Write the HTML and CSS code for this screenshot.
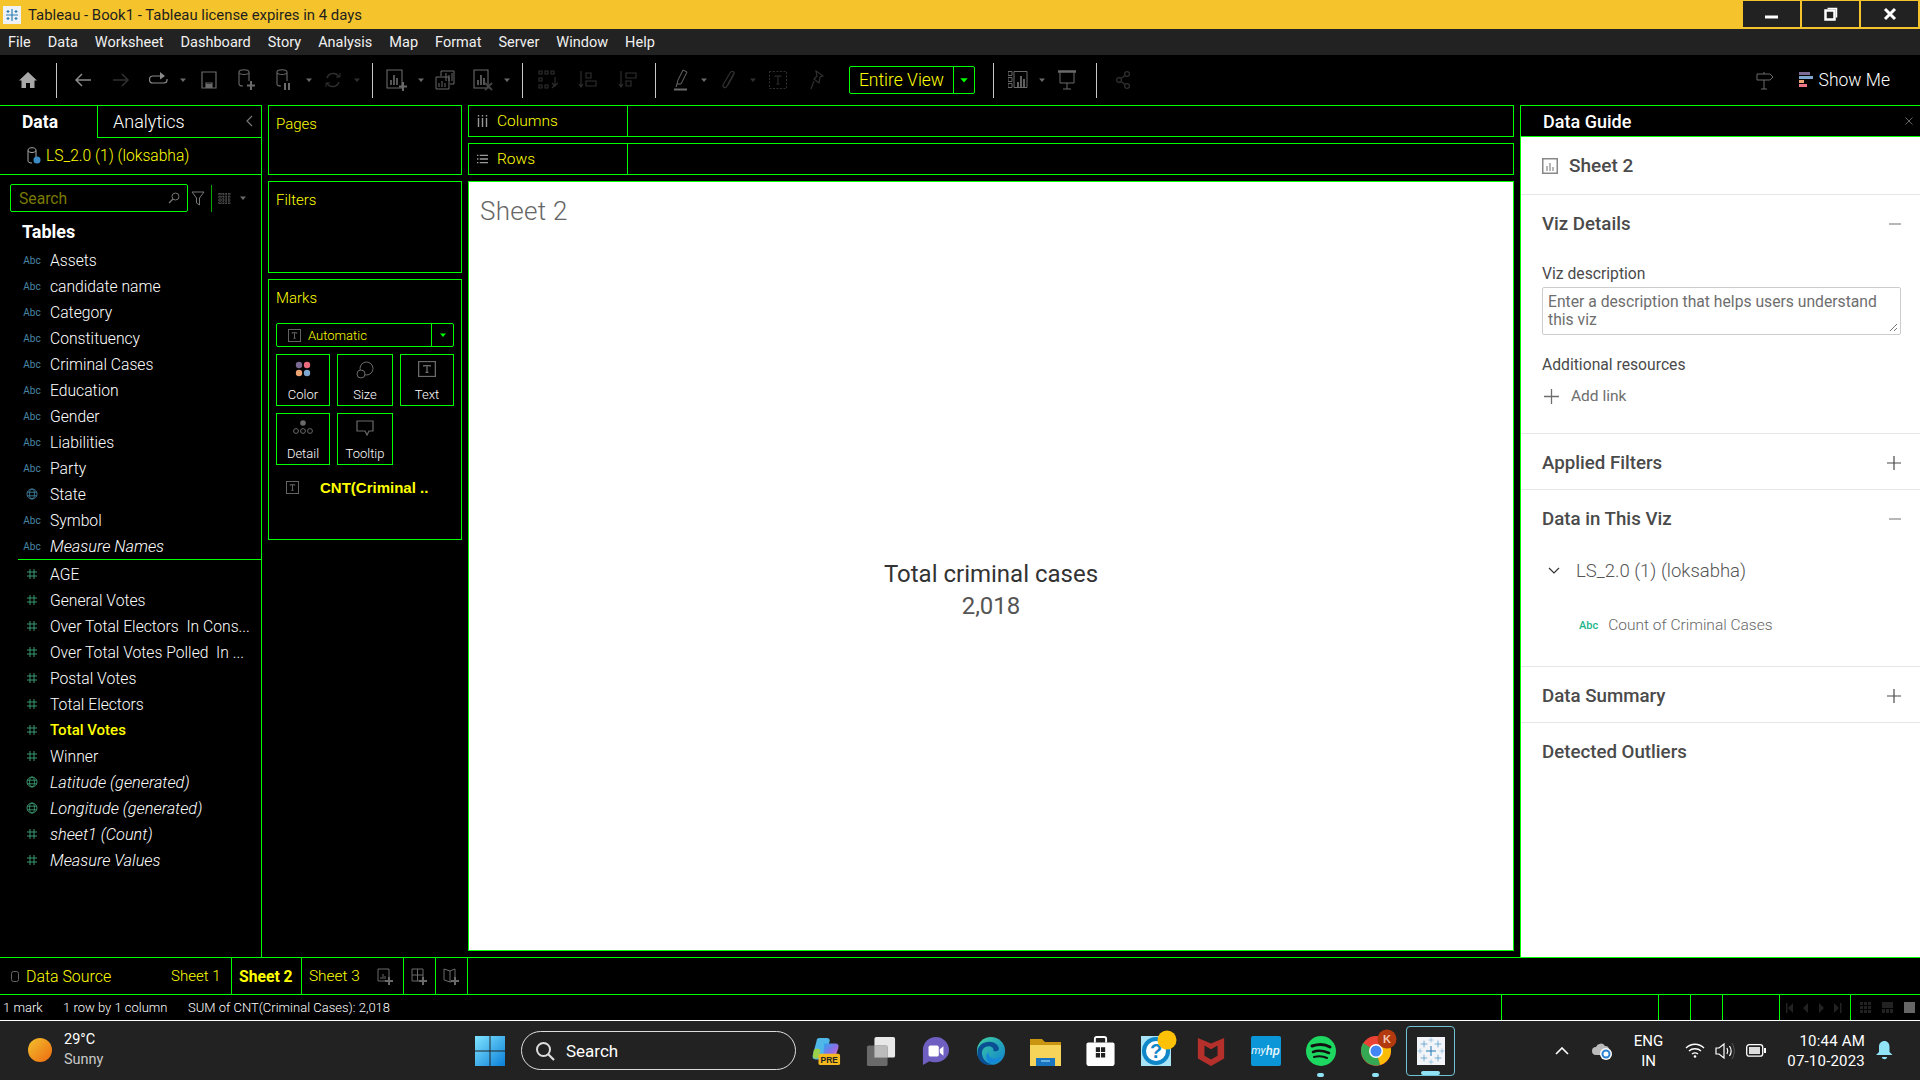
FILE: index.html

```html
<!DOCTYPE html>
<html lang="en">
<head>
    <meta charset="UTF-8">
    <title>Tableau - Book1 - Tableau license expires in 4 days</title>
    <link rel="stylesheet" href="styles.css">
</head>
<body>
    <svg class="defs" width="0" height="0">
        <symbol id="hash" viewBox="0 0 12 12"><path d="M4 1v10M8 1v10M1 4h10M1 8h10" fill="none" stroke="currentColor"/></symbol>
        <symbol id="globe" viewBox="0 0 12 12"><g fill="none" stroke="currentColor" stroke-width=".9"><circle cx="6" cy="6" r="5"/><ellipse cx="6" cy="6" rx="2.4" ry="5"/><path d="M1 4.2h10M1 7.8h10"/></g></symbol>
        <symbol id="tbox" viewBox="0 0 14 14"><rect x=".5" y=".5" width="13" height="13" fill="none" stroke="currentColor"/><path d="M4.5 5V4h5v1M7 4v6M5.8 10h2.4" fill="none" stroke="currentColor"/></symbol>
        <symbol id="caret" viewBox="0 0 8 8"><path d="M1 2.5h6L4 6z" fill="currentColor"/></symbol>
        <symbol id="plus" viewBox="0 0 14 14"><path d="M7 0v14M0 7h14" fill="none" stroke="currentColor" stroke-width="1.2"/></symbol>
        <symbol id="cross" viewBox="0 0 24 24"><path d="M12 2v20M2 12h20" fill="none" stroke="currentColor" stroke-width="2"/></symbol>
    </svg>

    <!-- window title -->
    <header class="titlebar">
        <svg class="app-icon" width="18" height="18" viewBox="0 0 18 18"><rect width="18" height="18" fill="#eef2f6"/><g stroke="#2f7fb5" stroke-width="1.2"><path d="M9 3v12M3 9h12M5 4v3M3.5 5.5h3M13 4v3M11.5 5.5h3M5 11v3M3.5 12.5h3M13 11v3M11.5 12.5h3"/></g></svg>
        <span class="title-text">Tableau - Book1 - Tableau license expires in 4 days</span>
        <div class="win-buttons">
            <div class="win-btn"><svg width="14" height="14" viewBox="0 0 14 14"><path d="M0 10h13" stroke="#fff" stroke-width="3"/></svg></div>
            <div class="win-btn"><svg width="14" height="14" viewBox="0 0 14 14"><path d="M3.5 1.5h9v9" fill="none" stroke="#fff" stroke-width="1.5"/><rect x="1.5" y="3.5" width="9" height="9" fill="none" stroke="#fff" stroke-width="2.5"/></svg></div>
            <div class="win-btn"><svg width="14" height="14" viewBox="0 0 14 14"><path d="M2 2l10 10M12 2L2 12" stroke="#fff" stroke-width="3"/></svg></div>
        </div>
    </header>

    <nav class="menubar">
        <span>File</span><span>Data</span><span>Worksheet</span><span>Dashboard</span><span>Story</span><span>Analysis</span><span>Map</span><span>Format</span><span>Server</span><span>Window</span><span>Help</span>
    </nav>

    <div class="toolbar">
        <div class="tool"><svg width="18" height="18" viewBox="0 0 18 18"><path d="M9 1L0 9.5h2.500V17h4.500v-5h4v5h4.500V9.5H18z" fill="#a8a8a8"/></svg></div>
        <div class="sep sep-first"></div>
        <div class="tool tool-lead"><svg class="nav" width="18" height="18" viewBox="0 0 18 18"><path d="M17 9H2M8 3L2 9l6 6" fill="none" stroke="currentColor" stroke-width="1.500"/></svg></div>
        <div class="tool"><svg class="off" width="18" height="18" viewBox="0 0 18 18"><path d="M1 9h15M10 3l6 6-6 6" fill="none" stroke="currentColor" stroke-width="1.500"/></svg></div>
        <div class="tool"><svg class="nav" width="20" height="18" viewBox="0 0 20 18"><path d="M12 5H4a3 3 0 0 0 0 7h11a3 3 0 0 0 3-3V8" fill="none" stroke="currentColor" stroke-width="1.200"/><path d="M11 1l5 4-5 3.500z" fill="currentColor"/></svg></div>
        <div class="drop mid"><svg width="8" height="8"><use href="#caret"/></svg></div>
        <div class="tool tool-push"><svg class="mid" width="16" height="18" viewBox="0 0 16 18"><path d="M1 1h14v16H1zM5 17v-5h6v5" fill="none" stroke="currentColor" stroke-width="1.200"/><path d="M5 13h6v4H5z" fill="currentColor"/></svg></div>
        <div class="tool"><svg class="mid" width="20" height="22" viewBox="0 0 20 22"><path d="M2 3c0-3 10-3 10 0v9M2 3v12c0 1 1 2 4 2" fill="none" stroke="currentColor" stroke-width="1.100"/><path d="M2 4c2 2 8 2 10 0" fill="none" stroke="currentColor"/><path d="M14 12v9M10 16.500h8" stroke="currentColor" stroke-width="2"/></svg></div>
        <div class="tool"><svg class="mid" width="20" height="22" viewBox="0 0 20 22"><path d="M2 3c0-3 10-3 10 0v9M2 3v12c0 1 1 2 4 2" fill="none" stroke="currentColor" stroke-width="1.100"/><path d="M2 4c2 2 8 2 10 0" fill="none" stroke="currentColor"/><path d="M10 14v7M14 14v7" stroke="currentColor" stroke-width="2"/></svg></div>
        <div class="drop mid"><svg width="8" height="8"><use href="#caret"/></svg></div>
        <div class="tool"><svg class="off" width="18" height="18" viewBox="0 0 18 18"><path d="M3 7a6.500 6.500 0 0 1 12-1M15 11a6.500 6.500 0 0 1-12 1" fill="none" stroke="currentColor" stroke-width="1.500"/><path d="M12 6h4V2M6 12H2v4" fill="none" stroke="currentColor"/></svg></div>
        <div class="drop off"><svg width="8" height="8"><use href="#caret"/></svg></div>
        <div class="sep sep-mid"></div>
        <div class="tool tool-after-sep"><svg class="mid" width="22" height="22" viewBox="0 0 22 22"><path d="M1 1h15v18H1z" fill="none" stroke="currentColor" stroke-width="1.100"/><path d="M5 11v5M8 6v10M11 9v7" stroke="currentColor" stroke-width="1.600"/><path d="M17 13v9M13 17.500h8" stroke="currentColor" stroke-width="2"/></svg></div>
        <div class="drop mid"><svg width="8" height="8"><use href="#caret"/></svg></div>
        <div class="tool"><svg class="mid" width="20" height="20" viewBox="0 0 20 20"><path d="M6 6V1h13v13h-4" fill="none" stroke="currentColor"/><path d="M1 7h13v12H1z" fill="none" stroke="currentColor"/><path d="M4 13v4M7 11v6M10 13v4M11 3v8M14 5v6M17 3v8" stroke="currentColor"/></svg></div>
        <div class="tool"><svg class="mid" width="20" height="22" viewBox="0 0 20 22"><path d="M1 1h14v18H1z" fill="none" stroke="currentColor" stroke-width="1.100"/><path d="M5 11v5M8 6v10M11 9v7" stroke="currentColor" stroke-width="1.600"/><path d="M12 14l7 7M19 14l-7 7" stroke="#444" stroke-width="1.800"/></svg></div>
        <div class="drop mid"><svg width="8" height="8"><use href="#caret"/></svg></div>
        <div class="sep sep-mid"></div>
        <div class="tool tool-swap"><svg class="off" width="20" height="20" viewBox="0 0 20 20"><path d="M1 1h3v3H1zM7 1h3v3H7zM13 1h3v3h-3zM1 8h3v3H1zM1 15h3v3H1zM7 15h3v3H7zM17 7v8l-3 3M14 13l3 3 3-3" fill="none" stroke="currentColor" stroke-width="1.100"/></svg></div>
        <div class="tool tool-wide"><svg class="off" width="20" height="20" viewBox="0 0 20 20"><path d="M3 1v16M1 14l2 3 2-3M8 3h5v5H8zM8 11h10v5H8z" fill="none" stroke="currentColor" stroke-width="1.100"/></svg></div>
        <div class="tool tool-wide"><svg class="off" width="20" height="20" viewBox="0 0 20 20"><path d="M3 1v16M1 14l2 3 2-3M8 3h10v5H8zM8 11h5v5H8z" fill="none" stroke="currentColor" stroke-width="1.100"/></svg></div>
        <div class="sep sep-last"></div>
        <div class="tool tool-marker"><svg class="mid" width="14" height="22" viewBox="0 0 14 22"><path d="M9 1l4 2-6 12H3l1-4zM3 15l-1 3" fill="none" stroke="currentColor"/><path d="M0 20.500h13" stroke="currentColor" stroke-width="2"/></svg></div>
        <div class="drop mid"><svg width="8" height="8"><use href="#caret"/></svg></div>
        <div class="tool tool-clip"><svg class="off" width="16" height="20" viewBox="0 0 16 20"><path d="M13 3L6 16c-1 3-5 1-4-1L9 3c2-3 5-1 4 1L7 15" fill="none" stroke="currentColor" stroke-width="1.200"/></svg></div>
        <div class="drop off"><svg width="8" height="8"><use href="#caret"/></svg></div>
        <div class="tool tool-clip"><svg class="off" width="18" height="18" viewBox="0 0 18 18"><rect x=".5" y=".5" width="17" height="17" fill="none" stroke="currentColor" stroke-dasharray="2 1.500"/><path d="M6 6V5h6v1M9 5v8M7.500 13h3" fill="none" stroke="currentColor"/></svg></div>
        <div class="tool tool-clip"><svg class="off" width="14" height="20" viewBox="0 0 14 20"><path d="M6 1l7 5-3 1-1 6-5-4 3-3zM4 11l-3 8" fill="none" stroke="currentColor" stroke-width="1.200"/></svg></div>
        <div class="fit-select">
            <span class="fit-label">Entire View</span>
            <span class="fit-arrow"><svg width="10" height="10"><use href="#caret"/></svg></span>
        </div>
        <div class="sep sep-fit"></div>
        <div class="tool tool-after-sep"><svg class="mid" width="20" height="18" viewBox="0 0 20 18"><path d="M0 .5h4v4H0zM0 6.500h4v4H0zM0 12.500h4v4H0zM6 .5h13v16H6z" fill="none" stroke="currentColor"/><path d="M10 11v5M13 5v11M16 8v8" stroke="currentColor" stroke-width="1.800"/></svg></div>
        <div class="drop mid"><svg width="8" height="8"><use href="#caret"/></svg></div>
        <div class="tool tool-clip"><svg class="mid" width="18" height="20" viewBox="0 0 18 20"><path d="M0 1.500h18" stroke="currentColor" stroke-width="2.500"/><path d="M2 2v11h14V2M9 13v6M5 19h8" fill="none" stroke="currentColor"/></svg></div>
        <div class="sep sep-share"></div>
        <div class="tool tool-lead"><svg class="off" width="14" height="18" viewBox="0 0 14 18"><g fill="none" stroke="currentColor" stroke-width="1.200"><circle cx="3" cy="9" r="2.400"/><circle cx="11" cy="3" r="2.400"/><circle cx="11" cy="15" r="2.400"/><path d="M5 7.500l4-3M5 10.500l4 3"/></g></svg></div>
        <div class="toolbar-right">
            <svg class="mid" width="18" height="19" viewBox="0 0 18 19"><path d="M1 3h13l3 3-3 3H1zM8 1v2M8 9v9M5 18h6" fill="none" stroke="currentColor"/></svg>
            <div class="show-me">
                <svg width="14" height="16" viewBox="0 0 14 16"><path d="M0 0h11v3H0z" fill="#7b6a93"/><path d="M0 4h14v3H0z" fill="#7fa6cf"/><path d="M0 8h5v3H0z" fill="#eda271"/><path d="M0 12h8v3H0z" fill="#ec7585"/></svg>
                <span>Show Me</span>
            </div>
        </div>
    </div>

    <main class="workspace">
        <!-- data pane -->
        <aside class="data-pane">
            <div class="pane-tabs">
                <div class="pane-tab active">Data</div>
                <div class="pane-tab">Analytics
                    <svg class="pane-collapse" width="8" height="12" viewBox="0 0 8 12"><path d="M6 1L1 6l5 5" fill="none" stroke="#777" stroke-width="1.200"/></svg>
                </div>
            </div>
            <div class="source-row">
                <svg width="14" height="18" viewBox="0 0 14 18"><path d="M1 3c0-3 8-3 8 0v8M1 3v11c0 1 1 2 4 2M1 4c2 2 6 2 8 0" fill="none" stroke="#aaa"/><circle cx="10" cy="13" r="3.500" fill="#3b8cc4"/></svg>
                <span>LS_2.0 (1) (loksabha)</span>
            </div>
            <div class="search-row">
                <div class="search-box">
                    <span>Search</span>
                    <svg width="12" height="12" viewBox="0 0 12 12"><circle cx="7.500" cy="4.500" r="3.500" fill="none" stroke="#777"/><path d="M5 7l-4 4" stroke="#777" stroke-width="1.300"/></svg>
                </div>
                <svg class="filter-icon" width="14" height="15" viewBox="0 0 14 15"><path d="M1 1h12L8.500 7v7l-3-2V7z" fill="none" stroke="#777"/></svg>
                <div class="search-sep"></div>
                <svg class="list-icon" width="13" height="11" viewBox="0 0 13 11"><path d="M0 1h13M0 4h13M0 7h13M0 10h13M2 0v11M5 0v11M8 0v11M11 0v11" stroke="#666" stroke-dasharray="1.500 1"/></svg>
                <svg class="mid list-caret" width="8" height="8"><use href="#caret"/></svg>
            </div>
            <h2 class="tables-head">Tables</h2>
            <div class="field-list">
                <div class="field"><span class="abc">Abc</span><span>Assets</span></div>
                <div class="field"><span class="abc">Abc</span><span>candidate name</span></div>
                <div class="field"><span class="abc">Abc</span><span>Category</span></div>
                <div class="field"><span class="abc">Abc</span><span>Constituency</span></div>
                <div class="field"><span class="abc">Abc</span><span>Criminal Cases</span></div>
                <div class="field"><span class="abc">Abc</span><span>Education</span></div>
                <div class="field"><span class="abc">Abc</span><span>Gender</span></div>
                <div class="field"><span class="abc">Abc</span><span>Liabilities</span></div>
                <div class="field"><span class="abc">Abc</span><span>Party</span></div>
                <div class="field"><span class="type-icon dim-blue"><svg width="12" height="12"><use href="#globe"/></svg></span><span>State</span></div>
                <div class="field"><span class="abc">Abc</span><span>Symbol</span></div>
                <div class="field"><span class="abc">Abc</span><span class="calc">Measure Names</span></div>
            </div>
            <div class="field-list measures">
                <div class="field"><span class="type-icon dim-green"><svg width="12" height="12"><use href="#hash"/></svg></span><span>AGE</span></div>
                <div class="field"><span class="type-icon dim-green"><svg width="12" height="12"><use href="#hash"/></svg></span><span>General Votes</span></div>
                <div class="field"><span class="type-icon dim-green"><svg width="12" height="12"><use href="#hash"/></svg></span><span>Over Total Electors  In Cons...</span></div>
                <div class="field"><span class="type-icon dim-green"><svg width="12" height="12"><use href="#hash"/></svg></span><span>Over Total Votes Polled  In ...</span></div>
                <div class="field"><span class="type-icon dim-green"><svg width="12" height="12"><use href="#hash"/></svg></span><span>Postal Votes</span></div>
                <div class="field"><span class="type-icon dim-green"><svg width="12" height="12"><use href="#hash"/></svg></span><span>Total Electors</span></div>
                <div class="field"><span class="type-icon dim-green"><svg width="12" height="12"><use href="#hash"/></svg></span><span class="in-use">Total Votes</span></div>
                <div class="field"><span class="type-icon dim-green"><svg width="12" height="12"><use href="#hash"/></svg></span><span>Winner</span></div>
                <div class="field"><span class="type-icon dim-green"><svg width="12" height="12"><use href="#globe"/></svg></span><span class="calc">Latitude (generated)</span></div>
                <div class="field"><span class="type-icon dim-green"><svg width="12" height="12"><use href="#globe"/></svg></span><span class="calc">Longitude (generated)</span></div>
                <div class="field"><span class="type-icon dim-green"><svg width="12" height="12"><use href="#hash"/></svg></span><span class="calc">sheet1 (Count)</span></div>
                <div class="field"><span class="type-icon dim-green"><svg width="12" height="12"><use href="#hash"/></svg></span><span class="calc">Measure Values</span></div>
            </div>
        </aside>

        <!-- pages, filters, marks -->
        <section class="cards">
            <div class="card card-pages"><div class="card-title">Pages</div></div>
            <div class="card card-filters"><div class="card-title">Filters</div></div>
            <div class="card card-marks">
                <div class="card-title">Marks</div>
                <div class="mark-select">
                    <div class="mark-type"><svg class="mid" width="13" height="13"><use href="#tbox"/></svg><span>Automatic</span></div>
                    <div class="mark-arrow"><svg width="8" height="8"><use href="#caret"/></svg></div>
                </div>
                <div class="mark-grid">
                    <div class="mark-btn">
                        <svg width="16" height="16" viewBox="0 0 16 16"><circle cx="4" cy="4" r="3.200" fill="#7b6a93"/><circle cx="12" cy="4" r="3.200" fill="#ec6a7d"/><circle cx="4" cy="12" r="3.200" fill="#eda271"/><circle cx="12" cy="12" r="3.200" fill="#7fa6cf"/></svg>
                        <span>Color</span>
                    </div>
                    <div class="mark-btn">
                        <svg class="mid" width="18" height="18" viewBox="0 0 18 18"><circle cx="10.500" cy="7.500" r="6.500" fill="none" stroke="currentColor"/><circle cx="5" cy="13" r="4" fill="#000" stroke="currentColor"/></svg>
                        <span>Size</span>
                    </div>
                    <div class="mark-btn">
                        <svg class="mid" width="18" height="16" viewBox="0 0 14 14" preserveAspectRatio="none"><use href="#tbox"/></svg>
                        <span>Text</span>
                    </div>
                    <div class="mark-btn">
                        <svg class="mid" width="20" height="16" viewBox="0 0 20 16"><circle cx="10" cy="3" r="2.800" fill="currentColor"/><g fill="none" stroke="currentColor"><circle cx="3" cy="11" r="2.400"/><circle cx="10" cy="11" r="2.400"/><circle cx="17" cy="11" r="2.400"/></g></svg>
                        <span>Detail</span>
                    </div>
                    <div class="mark-btn">
                        <svg class="mid" width="18" height="16" viewBox="0 0 18 16"><path d="M1 1h16v10h-4l-2 4-2-4H1z" fill="none" stroke="currentColor" stroke-width="1.200"/></svg>
                        <span>Tooltip</span>
                    </div>
                </div>
                <div class="mark-pill">
                    <svg class="mid" width="13" height="13"><use href="#tbox"/></svg>
                    <span>CNT(Criminal ..</span>
                </div>
            </div>
        </section>

        <!-- shelves and view -->
        <section class="view-col">
            <div class="shelf">
                <div class="shelf-label">
                    <svg width="10" height="12" viewBox="0 0 10 12"><path d="M1 3v9M5 3v9M9 3v9" stroke="#999" stroke-width="1.400"/><path d="M1 0v1.500M5 0v1.500M9 0v1.500" stroke="#999" stroke-width="1.400"/></svg>
                    <span>Columns</span>
                </div>
            </div>
            <div class="shelf">
                <div class="shelf-label">
                    <svg width="12" height="10" viewBox="0 0 12 10"><path d="M3 1h9M3 5h9M3 9h9M0 1h1.500M0 5h1.500M0 9h1.500" stroke="#999" stroke-width="1.400"/></svg>
                    <span>Rows</span>
                </div>
            </div>
            <div class="canvas">
                <div class="sheet-title">Sheet 2</div>
                <div class="viz-text">
                    <div class="viz-label">Total criminal cases</div>
                    <div class="viz-value">2,018</div>
                </div>
            </div>
        </section>

        <!-- data guide -->
        <aside class="guide">
            <div class="guide-head">
                <span>Data Guide</span>
                <svg width="8" height="8" viewBox="0 0 8 8"><path d="M.5.5l7 7M7.500.5l-7 7" stroke="#666"/></svg>
            </div>
            <div class="guide-sheet">
                <svg width="16" height="16" viewBox="0 0 16 16"><rect x=".75" y=".75" width="14.500" height="14.500" fill="none" stroke="#888" stroke-width="1.500"/><path d="M5 8v5M8 5v8M11 9v4" stroke="#888" stroke-width="1.200"/></svg>
                <span>Sheet 2</span>
            </div>
            <div class="guide-section section-details">
                <div class="section-head"><span>Viz Details</span><svg width="12" height="12" viewBox="0 0 12 12"><path d="M0 6h12" stroke="#888" stroke-width="1.200"/></svg></div>
                <div class="field-label label-desc">Viz description</div>
                <div class="desc-box">Enter a description that helps users understand this viz
                    <svg class="resize-grip" width="9" height="9" viewBox="0 0 9 9"><path d="M1 8l7-7M5 8l3-3" stroke="#777"/></svg>
                </div>
                <div class="field-label label-res">Additional resources</div>
                <div class="add-link"><svg width="15" height="15"><use href="#plus"/></svg><span>Add link</span></div>
            </div>
            <div class="guide-section section-bar">
                <div class="section-head"><span>Applied Filters</span><svg width="14" height="14"><use href="#plus"/></svg></div>
            </div>
            <div class="guide-section section-data">
                <div class="section-head"><span>Data in This Viz</span><svg width="12" height="12" viewBox="0 0 12 12"><path d="M0 6h12" stroke="#888" stroke-width="1.200"/></svg></div>
                <div class="ds-row"><svg width="12" height="8" viewBox="0 0 12 8"><path d="M1 1l5 5 5-5" fill="none" stroke="#333" stroke-width="1.200"/></svg><span>LS_2.0 (1) (loksabha)</span></div>
                <div class="count-row"><span class="abc-green">Abc</span><span>Count of Criminal Cases</span></div>
            </div>
            <div class="guide-section section-bar">
                <div class="section-head"><span>Data Summary</span><svg width="14" height="14"><use href="#plus"/></svg></div>
            </div>
            <div class="guide-section section-bar last">
                <div class="section-head"><span>Detected Outliers</span></div>
            </div>
        </aside>
    </main>

    <div class="sheet-tabs">
        <div class="tab-source"><svg width="8" height="11" viewBox="0 0 8 11"><rect x=".5" y=".5" width="7" height="10" rx="2" fill="none" stroke="#666"/></svg><span>Data Source</span></div>
        <div class="tab">Sheet 1</div>
        <div class="tab current">Sheet 2</div>
        <div class="tab tab-last"><span>Sheet 3</span>
            <svg class="mid" width="17" height="17" viewBox="0 0 17 17"><path d="M1 1h11v12H1z" fill="none" stroke="currentColor"/><path d="M4 9v2M6 6v5M8 8v3" stroke="currentColor"/><path d="M12 9v8M8 13h8" stroke="currentColor" stroke-width="2"/></svg>
        </div>
        <div class="tab-new"><svg class="mid" width="17" height="17" viewBox="0 0 17 17"><path d="M1 1h11v12H1zM1 7h11M6.500 1v12" fill="none" stroke="currentColor"/><path d="M12 9v8M8 13h8" stroke="currentColor" stroke-width="2"/></svg></div>
        <div class="tab-new"><svg class="mid" width="17" height="17" viewBox="0 0 17 17"><path d="M1 1l6 2 5-2v12l-5 1-6-2zM7 3v11" fill="none" stroke="currentColor"/><path d="M12 9v8M8 13h8" stroke="currentColor" stroke-width="2"/></svg></div>
    </div>

    <footer class="statusbar">
        <div class="status-text"><span>1 mark</span><span>1 row by 1 column</span><span>SUM of CNT(Criminal Cases): 2,018</span></div>
        <div class="status-cell cell-a"></div>
        <div class="status-cell cell-b"></div>
        <div class="status-cell cell-c"></div>
        <div class="status-cell cell-d"></div>
        <div class="status-cell cell-e">
            <svg width="58" height="10" viewBox="0 0 58 10" fill="#222"><path d="M0 0h1.500v10H0zM7 0v10L2 5zM22 0v10l-5-5zM33 0v10l5-5zM48 0v10l5-5zM54 0h1.500v10H54z"/></svg>
        </div>
        <div class="status-cell cell-f">
            <svg width="11" height="11" viewBox="0 0 11 11"><path d="M0 0h3v3H0zM4 0h3v3H4zM8 0h3v3H8zM0 4h3v3H0zM4 4h3v3H4zM8 4h3v3H8zM0 8h3v3H0zM4 8h3v3H4zM8 8h3v3H8z" fill="#222"/></svg>
            <svg width="11" height="11" viewBox="0 0 11 11"><path d="M0 0h11v6H0zM0 7h3v4H0zM4 7h3v4H4zM8 7h3v4H8z" fill="#222"/></svg>
            <svg width="11" height="11" viewBox="0 0 11 11"><rect width="11" height="11" fill="#666"/></svg>
        </div>
    </footer>

    <div class="taskbar">
        <div class="weather">
            <div class="sun"></div>
            <div class="weather-text"><div>29°C</div><div class="dim">Sunny</div></div>
        </div>
        <div class="task-center">
            <svg class="win-logo" width="30" height="30" viewBox="0 0 30 30"><defs><linearGradient id="win" x1="0" y1="0" x2="1" y2="1"><stop offset="0" stop-color="#7fe4ff"/><stop offset="1" stop-color="#0b7fd8"/></linearGradient></defs><path d="M0 0h14.500v14.500H0zM15.500 0H30v14.500H15.500zM0 15.500h14.500V30H0zM15.500 15.500H30V30H15.500z" fill="url(#win)"/></svg>
            <div class="task-search">
                <svg width="20" height="20" viewBox="0 0 20 20"><circle cx="8.500" cy="8.500" r="6.500" fill="none" stroke="#ddd" stroke-width="2"/><path d="M13 13l6 6" stroke="#ddd" stroke-width="2.200"/></svg>
                <span>Search</span>
            </div>
            <div class="task-icons">
                <div class="task-icon">
                    <svg width="30" height="30" viewBox="0 0 32 32"><defs><linearGradient id="co" x1="0" y1="0" x2="1" y2="1"><stop offset="0" stop-color="#2aa8f0"/><stop offset=".5" stop-color="#8b6fe8"/><stop offset="1" stop-color="#f06fb0"/></linearGradient></defs><path d="M9 2h8c2 0 3 1 3 3l-5 17c-1 2-2 3-4 3H5c-3 0-4-2-3-5L6 5c0-2 1-3 3-3z" fill="#4fb8e8"/><path d="M3 15c2-2 5-2 7 0l-2 8c-3 2-6 1-6-2z" fill="#9ad14b"/><path d="M14 8h12c3 0 4 2 3 5l-3 9c-1 2-2 3-4 3h-9z" fill="url(#co)"/><rect x="8" y="19" width="23" height="12" rx="2" fill="#f5b91f"/><text x="19.500" y="28.500" class="pre-text" text-anchor="middle">PRE</text></svg>
                </div>
                <div class="task-icon">
                    <svg width="30" height="30" viewBox="0 0 32 32"><rect x="9" y="1" width="22" height="22" rx="2" fill="#e8e8e8"/><rect x="1" y="10" width="22" height="22" rx="2" fill="#6a6a6a"/><rect x="9" y="10" width="14" height="13" fill="#bbb"/></svg>
                </div>
                <div class="task-icon">
                    <svg width="28" height="30" viewBox="0 0 30 32"><path d="M15 1C7 1 1 7 1 15v16l7-4c2 1 4 1 7 1 8 0 14-6 14-13S23 1 15 1z" fill="#6e5fc0"/><rect x="7" y="10" width="11" height="12" rx="2" fill="#fff"/><path d="M19 14l4-3v10l-4-3z" fill="#fff"/></svg>
                </div>
                <div class="task-icon">
                    <svg width="30" height="30" viewBox="0 0 31 32"><defs><linearGradient id="edge" x1="0" y1="0" x2="1" y2="1"><stop offset="0" stop-color="#3fd0a0"/><stop offset="1" stop-color="#0f7fd0"/></linearGradient></defs><circle cx="15.500" cy="16" r="15" fill="url(#edge)"/><path d="M1 18c0-8 6-12 13-12 5 0 9 3 10 7 0 3-3 4-6 3 1-3-2-5-5-5-5 0-8 4-7 9 1 6 6 10 12 10-9 3-17-3-17-12z" fill="#0a4f94"/><path d="M13 17c-1 4 2 7 6 7 3 0 6-1 8-3-2 5-7 9-13 8-4-3-5-9-1-12z" fill="#1587d8"/></svg>
                </div>
                <div class="task-icon">
                    <svg width="31" height="30" viewBox="0 0 31 30"><path d="M0 3h12l3 3h16v24H0z" fill="#c99511"/><path d="M0 9h31v21H0z" fill="#f6d45a"/><path d="M6 22h19v8H6z" fill="#1a75c0"/><path d="M11 25h9" stroke="#7cc4f0" stroke-width="1.500"/></svg>
                </div>
                <div class="task-icon">
                    <svg width="29" height="30" viewBox="0 0 30 32"><path d="M2 7h26c1 0 2 1 2 2v20c0 2-1 3-3 3H3c-2 0-3-1-3-3V9c0-1 1-2 2-2z" fill="#fff"/><path d="M9 7V3c0-1 1-2 2-2h8c1 0 2 1 2 2v4" fill="none" stroke="#fff" stroke-width="2"/><path d="M10 12h4.500v5H10zM15.500 12H20v5h-4.500zM10 18h4.500v5H10zM15.500 18H20v5h-4.500z" fill="#222"/></svg>
                </div>
                <div class="task-icon">
                    <svg width="36" height="38" viewBox="0 0 36 38"><rect x="3" y="4" width="30" height="30" fill="#a8e4f5"/><circle cx="18" cy="19" r="14" fill="#0f86c8"/><circle cx="18" cy="19" r="10" fill="#fff"/><text x="18" y="26" class="help-text" text-anchor="middle">?</text><circle cx="29" cy="8" r="9.500" fill="#ffc107"/></svg>
                </div>
                <div class="task-icon">
                    <svg width="28" height="30" viewBox="0 0 28 32"><path d="M0 2l7 3 7 3 7-3 7-3v22l-14 8-14-8z" fill="#b5302b"/><path d="M7 10l7 4 7-4v11l-7 4-7-4z" fill="#222"/></svg>
                </div>
                <div class="task-icon"><div class="myhp">my<b>hp</b></div></div>
                <div class="task-icon">
                    <svg width="30" height="30" viewBox="0 0 30 30"><circle cx="15" cy="15" r="15" fill="#1ed760"/><g fill="none" stroke="#111" stroke-linecap="round"><path d="M6 10c6-2 13-2 18 1" stroke-width="3"/><path d="M7 16c5-2 11-1 16 1" stroke-width="2.500"/><path d="M8 21c4-1 9-1 13 1" stroke-width="2"/></g></svg>
                    <div class="run-dot"></div>
                </div>
                <div class="task-icon">
                    <svg width="38" height="38" viewBox="0 0 38 38"><circle cx="19" cy="19" r="15" fill="#ea4335"/><path d="M19 19L32 11a15 15 0 0 1-9 22z" fill="#fbbc05"/><path d="M19 19l4 14A15 15 0 0 1 6 11z" fill="#34a853"/><circle cx="19" cy="19" r="7" fill="#fff"/><circle cx="19" cy="19" r="5.500" fill="#4285f4"/><circle cx="30" cy="7" r="9.500" fill="#b33a0e"/><text x="30" y="11" class="badge-text" text-anchor="middle">K</text></svg>
                    <div class="run-dot"></div>
                </div>
                <div class="task-icon selected">
                    <svg width="28" height="28" viewBox="0 0 28 28"><rect width="28" height="28" fill="#f2f4f7"/><use href="#cross" x="8" y="8" width="12" height="12" color="#1f77b4"/><use href="#cross" x="3" y="3" width="8" height="8" color="#3d8ec4"/><use href="#cross" x="17" y="3" width="8" height="8" color="#3d8ec4"/><use href="#cross" x="3" y="17" width="8" height="8" color="#3d8ec4"/><use href="#cross" x="17" y="17" width="8" height="8" color="#3d8ec4"/><use href="#cross" x="11" y="0" width="6" height="6" color="#5aa3d0"/><use href="#cross" x="11" y="22" width="6" height="6" color="#5aa3d0"/><use href="#cross" x="0" y="11" width="6" height="6" color="#5aa3d0"/><use href="#cross" x="22" y="11" width="6" height="6" color="#5aa3d0"/></svg>
                    <div class="run-bar"></div>
                </div>
            </div>
        </div>
        <div class="tray">
            <svg class="tray-chev" width="14" height="8" viewBox="0 0 14 8"><path d="M1 7l6-6 6 6" fill="none" stroke="#fff" stroke-width="1.600"/></svg>
            <svg class="tray-cloud" width="21" height="20" viewBox="0 0 21 20"><path d="M4 14a4 4 0 0 1 0-8 5 5 0 0 1 9-1 4 4 0 0 1 3 7l-5 2z" fill="#bbb"/><circle cx="14" cy="13" r="6" fill="#fff"/><circle cx="14" cy="13" r="3.500" fill="none" stroke="#2a7fd0" stroke-width="2"/></svg>
            <div class="tray-lang"><div>ENG</div><div>IN</div></div>
            <svg class="tray-wifi" width="20" height="15" viewBox="0 0 20 15"><g fill="none" stroke="#fff" stroke-width="1.300"><path d="M1 5c5-5 13-5 18 0M4 8c3-3 9-3 12 0M7 11c2-1.500 4-1.500 6 0"/></g><circle cx="10" cy="13.500" r="1.300" fill="#fff"/></svg>
            <svg class="tray-vol" width="20" height="18" viewBox="0 0 20 18"><path d="M1 6h3l5-4v14l-5-4H1z" fill="none" stroke="#fff" stroke-width="1.200"/><path d="M12 6c1 2 1 4 0 6M14.500 4c2 3 2 7 0 10" fill="none" stroke="#fff" stroke-width="1.200"/><path d="M17 1c3 5 3 11 0 16" fill="none" stroke="#555"/></svg>
            <svg class="tray-batt" width="20" height="13" viewBox="0 0 20 13"><rect x=".7" y=".7" width="16" height="11.500" rx="2.500" fill="none" stroke="#fff" stroke-width="1.300"/><rect x="3" y="3" width="11" height="7" fill="#ddd"/><path d="M18 4h2v5h-2z" fill="#fff"/></svg>
            <div class="tray-clock"><div>10:44 AM</div><div>07-10-2023</div></div>
            <svg class="tray-bell" width="17" height="19" viewBox="0 0 17 19"><path d="M8.500 0c3 0 5 2.500 5 6v5l3 3H0l3-3V6c0-3.500 2-6 5.500-6z" fill="#8fe3f5"/><path d="M6 16h5c0 3-5 3-5 0z" fill="#8fe3f5"/></svg>
        </div>
    </div>
</body>
</html>
```

FILE: styles.css

```css
* {
    box-sizing: border-box;
}
html, body {
    margin: 0;
    height: 100%;
}
body {
    width: 1920px;
    height: 1080px;
    overflow: hidden;
    display: flex;
    flex-direction: column;
    background-color: #000;
    color: #fff;
    font-family: Roboto, "Open Sans", sans-serif;
    font-size: 14px;
}
.defs {
    position: absolute;
}
.mid {
    color: #6a6a6a;
}
.nav {
    color: #8a8a8a;
}
.off {
    color: #303030;
}

/* title bar */
.titlebar {
    height: 29px;
    flex: none;
    display: flex;
    align-items: center;
    padding-left: 3px;
    background-color: #f5c42c;
    color: #1e1e1e;
}
.title-text {
    margin-left: 7px;
    font-size: 14.9px;
}
.win-buttons {
    margin-left: auto;
    display: flex;
    gap: 2px;
    padding-right: 2px;
    height: 100%;
    padding-top: 1px;
    padding-bottom: 2px;
}
.win-btn {
    width: 57px;
    background-color: #222;
    display: flex;
    align-items: center;
    justify-content: center;
}

.menubar {
    height: 26px;
    flex: none;
    display: flex;
    align-items: center;
    gap: 17px;
    padding-left: 8px;
    background-color: #222;
    color: #f0f0f0;
    font-size: 14.5px;
}

/* toolbar */
.toolbar {
    height: 50px;
    flex: none;
    display: flex;
    align-items: center;
    padding-left: 9px;
}
.tool {
    width: 38px;
    flex: none;
    display: flex;
    justify-content: center;
    align-items: center;
}
.tool-lead {
    margin-left: 7px;
}
.tool-after-sep {
    margin-left: 5px;
}
.tool-swap {
    margin-left: 6px;
}
.tool-push, .tool-wide {
    margin-left: 2px;
}
.tool-marker {
    margin-left: 7px;
    width: 36px;
}
.tool-clip {
    margin-left: 1px;
}
.drop {
    width: 10px;
    flex: none;
    display: flex;
    justify-content: center;
}
.sep {
    width: 1px;
    height: 35px;
    flex: none;
    background-color: #c8c8c8;
}
.sep-first {
    margin-left: 9px;
}
.sep-mid, .sep-share {
    margin-left: 10px;
}
.sep-last {
    margin-left: 8px;
}
.sep-fit {
    margin-left: 18px;
}
.fit-select {
    margin-left: 13px;
    width: 126px;
    height: 28px;
    flex: none;
    display: flex;
    align-items: center;
    border: 1px solid #0f0;
    border-radius: 2px;
    color: #ff0;
    font-size: 17.5px;
    font-weight: 300;
}
.fit-label {
    width: 104px;
    text-align: center;
    line-height: 26px;
    border-right: 1px solid #0f0;
}
.fit-arrow {
    flex: 1;
    display: flex;
    justify-content: center;
    color: #0f0;
}
.toolbar-right {
    margin-left: auto;
    display: flex;
    align-items: center;
    padding-right: 30px;
    gap: 25px;
}
.show-me {
    display: flex;
    align-items: center;
    gap: 6px;
    font-size: 17.5px;
    font-weight: 300;
}

/* main area */
.workspace {
    flex: 1;
    min-height: 0;
    display: flex;
    gap: 6px;
}
.data-pane {
    width: 262px;
    flex: none;
    display: flex;
    flex-direction: column;
    border-top: 1px solid #0f0;
    border-right: 1px solid #0f0;
}
.pane-tabs {
    height: 32px;
    flex: none;
    display: flex;
}
.pane-tab {
    position: relative;
    flex: 1;
    padding-left: 15px;
    line-height: 32px;
    font-size: 18px;
    font-weight: 300;
    border-bottom: 1px solid #0f0;
    border-left: 1px solid #0f0;
}
.pane-tab.active {
    width: 97px;
    flex: none;
    padding-left: 22px;
    font-weight: 700;
    font-size: 17.5px;
    border: none;
}
.pane-collapse {
    position: absolute;
    right: 7px;
    top: 9px;
}
.source-row {
    height: 37px;
    flex: none;
    display: flex;
    align-items: center;
    gap: 5px;
    padding-left: 27px;
    border-bottom: 1px solid #0f0;
    color: #ff0;
    font-size: 15.6px;
    font-weight: 300;
}
.search-row {
    display: flex;
    align-items: center;
    flex: none;
    margin-top: 9px;
    padding-left: 10px;
}
.search-box {
    width: 178px;
    height: 28px;
    display: flex;
    align-items: center;
    justify-content: space-between;
    padding: 0 7px 0 8px;
    border: 1px solid #0f0;
    border-radius: 2px;
    color: #7a7a00;
    font-size: 15.7px;
}
.filter-icon {
    margin-left: 3px;
}
.search-sep {
    width: 1px;
    height: 27px;
    margin-left: 6px;
    background-color: #0a0;
}
.list-icon {
    margin-left: 6px;
}
.list-caret {
    margin-left: 8px;
}
.tables-head {
    margin: 9px 0 0 22px;
    font-size: 18px;
    font-weight: 700;
    line-height: 21px;
}
.field-list {
    margin-top: 5px;
    font-size: 15.7px;
    font-weight: 300;
}
.field-list.measures {
    margin-top: 0;
    margin-left: 18px;
    padding-top: 1px;
    border-top: 1px solid #0f0;
}
.field {
    height: 26px;
    display: flex;
    align-items: center;
    padding-left: 50px;
    position: relative;
    white-space: pre;
}
.measures .field {
    padding-left: 32px;
}
.abc, .type-icon {
    position: absolute;
    left: 23px;
    width: 18px;
    text-align: center;
    display: flex;
    justify-content: center;
}
.measures .type-icon {
    left: 5px;
}
.abc {
    font-size: 10px;
    color: #4a86a6;
    font-weight: 400;
}
.dim-blue {
    color: #3f7f9e;
}
.dim-green {
    color: #3a9a72;
}
.calc {
    font-style: italic;
    font-size: 16.3px;
}
.in-use {
    color: #ff0;
    font-size: 15px;
    font-weight: 500;
}

/* pages, filters, marks */
.cards {
    width: 194px;
    flex: none;
    display: flex;
    flex-direction: column;
    gap: 6px;
}
.card {
    border: 1px solid #0f0;
    padding: 0 7px;
}
.card-pages {
    height: 70px;
}
.card-filters {
    height: 92px;
}
.card-marks {
    height: 261px;
}
.card-title {
    margin-top: 9px;
    color: #ff0;
    font-size: 15px;
    font-weight: 300;
    line-height: 18px;
}
.mark-select {
    margin-top: 16px;
    height: 24px;
    width: 178px;
    display: flex;
    border: 1px solid #0f0;
    border-radius: 2px;
    color: #ff0;
    font-size: 13px;
    font-weight: 300;
}
.mark-type {
    width: 155px;
    display: flex;
    align-items: center;
    gap: 7px;
    padding-left: 11px;
    border-right: 1px solid #0f0;
}
.mark-arrow {
    flex: 1;
    display: flex;
    justify-content: center;
    align-items: center;
    color: #0f0;
}
.mark-grid {
    margin-top: 7px;
    display: grid;
    grid-template-columns: 54px 56px 54px;
    grid-auto-rows: 52px;
    gap: 7px;
}
.mark-btn {
    display: flex;
    flex-direction: column;
    align-items: center;
    justify-content: space-between;
    padding: 6px 0 3px;
    border: 1px solid #0f0;
    font-size: 13px;
    font-weight: 300;
}
.mark-pill {
    margin-top: 14px;
    display: flex;
    align-items: center;
    padding-left: 10px;
    gap: 21px;
    color: #ff0;
    font-family: "Liberation Sans", sans-serif;
    font-size: 15px;
    font-weight: 700;
}

/* shelves and canvas */
.view-col {
    flex: 1;
    min-width: 0;
    display: flex;
    flex-direction: column;
    gap: 6px;
    padding-bottom: 6px;
}
.shelf {
    height: 32px;
    flex: none;
    border: 1px solid #0f0;
}
.shelf-label {
    width: 159px;
    height: 100%;
    display: flex;
    align-items: center;
    gap: 9px;
    padding-left: 8px;
    border-right: 1px solid #0f0;
    color: #ff0;
    font-size: 15.5px;
    font-weight: 300;
}
.shelf-label svg {
    width: 11px;
}
.canvas {
    flex: 1;
    display: flex;
    flex-direction: column;
    border: 1px solid #0f0;
    background-color: #fff;
}
.sheet-title {
    padding: 14px 0 0 11px;
    height: 47px;
    flex: none;
    color: #666;
    font-size: 26px;
    font-weight: 300;
    letter-spacing: .3px;
}
.viz-text {
    flex: 1;
    display: flex;
    flex-direction: column;
    justify-content: center;
    align-items: center;
    line-height: 32px;
    font-size: 24px;
}
.viz-label {
    color: #333;
}
.viz-value {
    color: #555;
}

/* data guide */
.guide {
    width: 400px;
    flex: none;
    display: flex;
    flex-direction: column;
    background-color: #fff;
    border-left: 1px solid #0f0;
    color: #4a4a4a;
}
.guide-head {
    height: 32px;
    flex: none;
    display: flex;
    align-items: center;
    justify-content: space-between;
    padding: 0 7px 0 22px;
    background-color: #000;
    border-top: 1px solid #0f0;
    border-bottom: 1px solid #0f0;
    color: #fff;
    font-size: 18px;
    font-weight: 500;
}
.guide-sheet {
    height: 58px;
    flex: none;
    display: flex;
    align-items: center;
    gap: 11px;
    padding-left: 21px;
    border-bottom: 1px solid #e6e6e6;
    font-size: 19px;
    font-weight: 500;
}
.guide-section {
    padding: 0 19px 0 21px;
    border-bottom: 1px solid #e6e6e6;
}
.guide-section.last {
    border-bottom: none;
}
.section-head {
    height: 46px;
    display: flex;
    align-items: center;
    justify-content: space-between;
    font-size: 18.7px;
    font-weight: 500;
}
.section-details {
    height: 239px;
    padding-top: 6px;
}
.section-bar {
    height: 56px;
    padding-top: 6px;
}
.section-data {
    height: 177px;
    padding-top: 6px;
}
.field-label {
    font-size: 15.7px;
}
.label-desc {
    margin-top: 17px;
    line-height: 20px;
}
.label-res {
    margin-top: 20px;
    line-height: 20px;
}
.desc-box {
    position: relative;
    margin-top: 3px;
    height: 48px;
    padding: 5px 5px 4px;
    border: 1px solid #ccc;
    border-radius: 2px;
    color: #6e6e6e;
    font-size: 15.7px;
    line-height: 18px;
}
.resize-grip {
    position: absolute;
    right: 2px;
    bottom: 2px;
}
.add-link {
    margin-top: 12px;
    display: flex;
    align-items: center;
    gap: 12px;
    padding-left: 2px;
    color: #6e6e6e;
    font-size: 15.5px;
}
.ds-row {
    margin-top: 18px;
    display: flex;
    align-items: center;
    gap: 16px;
    padding-left: 6px;
    color: #555;
    font-size: 18.5px;
    font-weight: 300;
}
.count-row {
    margin-top: 34px;
    display: flex;
    align-items: center;
    gap: 10px;
    padding-left: 37px;
    color: #666;
    font-size: 15.5px;
    font-weight: 300;
}
.abc-green {
    color: #1fb58a;
    font-size: 11px;
    font-weight: 500;
}

/* sheet tabs and status */
.sheet-tabs {
    height: 37px;
    flex: none;
    display: flex;
    border-top: 1px solid #0f0;
    color: #ff0;
    font-size: 15px;
    font-weight: 300;
    white-space: nowrap;
}
.tab-source {
    width: 166px;
    display: flex;
    align-items: center;
    gap: 7px;
    padding-left: 11px;
    font-size: 15.9px;
}
.tab {
    display: flex;
    align-items: center;
    padding: 0 7px;
    border-right: 1px solid #0f0;
}
.tab:nth-child(2) {
    width: 66px;
    padding-left: 5px;
}
.tab.current {
    width: 70px;
    font-size: 15.7px;
    font-weight: 700;
}
.tab-last {
    width: 102px;
    gap: 17px;
    font-size: 15.4px;
}
.tab-new {
    width: 32px;
    display: flex;
    align-items: center;
    justify-content: center;
    border-right: 1px solid #0f0;
}
.statusbar {
    height: 27px;
    flex: none;
    display: flex;
    border-top: 1px solid #0f0;
    border-bottom: 1px solid #fff;
}
.status-text {
    width: 1501px;
    display: flex;
    align-items: center;
    padding-left: 3px;
    font-size: 13px;
    font-weight: 300;
}
.status-text span:nth-child(1) {
    width: 60px;
}
.status-text span:nth-child(2) {
    width: 125px;
}
.status-cell {
    display: flex;
    align-items: center;
    border-left: 1px solid #0f0;
}
.cell-a {
    width: 157px;
}
.cell-b, .cell-c {
    width: 32px;
}
.cell-d {
    width: 57px;
}
.cell-e {
    width: 71px;
    justify-content: center;
}
.cell-f {
    flex: 1;
    gap: 11px;
    padding-left: 9px;
}

/* windows taskbar */
.taskbar {
    height: 59px;
    flex: none;
    display: flex;
    align-items: center;
    background-color: #222;
}
.weather {
    width: 475px;
    flex: none;
    display: flex;
    align-items: center;
    padding-left: 28px;
    gap: 12px;
    margin-bottom: 2px;
}
.sun {
    width: 24px;
    height: 24px;
    border-radius: 50%;
    background: linear-gradient(135deg, #f2c12e, #ee6a10);
}
.weather-text {
    font-size: 14.5px;
    line-height: 20px;
}
.dim {
    color: #c8c8c8;
}
.task-center {
    display: flex;
    align-items: center;
}
.task-search {
    width: 275px;
    height: 39px;
    margin-left: 16px;
    display: flex;
    align-items: center;
    gap: 11px;
    padding-left: 13px;
    border: 1px solid #ddd;
    border-radius: 20px;
    font-size: 17px;
}
.task-icons {
    display: flex;
    margin-left: 2px;
}
.task-icon {
    position: relative;
    width: 55px;
    height: 50px;
    display: flex;
    align-items: center;
    justify-content: center;
}
.task-icon svg {
    overflow: visible;
}
.task-icon.selected {
    border: 1px solid #6fc3d6;
    border-radius: 4px;
    width: 49px;
    margin-left: 3px;
}
.pre-text {
    fill: #222;
    font-family: "Liberation Sans", sans-serif;
    font-size: 9px;
    font-weight: 700;
}
.help-text {
    fill: #0f86c8;
    font-family: "Liberation Sans", sans-serif;
    font-size: 20px;
    font-weight: 700;
}
.badge-text {
    fill: #f3c6b4;
    font-family: "Liberation Sans", sans-serif;
    font-size: 11px;
    font-weight: 700;
}
.myhp {
    width: 30px;
    height: 30px;
    background-color: #0b96d8;
    border-radius: 2px;
    display: flex;
    align-items: center;
    justify-content: center;
    font-size: 11px;
    font-style: italic;
    color: #e8f6fc;
}
.myhp b {
    font-weight: 500;
    font-size: 13px;
}
.run-dot {
    position: absolute;
    left: 24px;
    bottom: -1px;
    width: 7px;
    height: 4px;
    border-radius: 2px;
    background-color: #8fe3f5;
}
.run-bar {
    position: absolute;
    left: 14px;
    bottom: 0;
    width: 19px;
    height: 4px;
    border-radius: 2px;
    background-color: #8fe3f5;
}
.tray {
    margin-left: auto;
    display: flex;
    align-items: center;
    padding-right: 27px;
    font-size: 15px;
    line-height: 20px;
}
.tray-cloud {
    margin-left: 23px;
}
.tray-lang {
    margin-left: 21px;
    text-align: center;
}
.tray-wifi {
    margin-left: 22px;
}
.tray-vol {
    margin-left: 10px;
}
.tray-batt {
    margin-left: 11px;
}
.tray-clock {
    margin-left: 21px;
    text-align: right;
    font-size: 15px;
    letter-spacing: .2px;
}
.tray-bell {
    margin-left: 11px;
}
```
